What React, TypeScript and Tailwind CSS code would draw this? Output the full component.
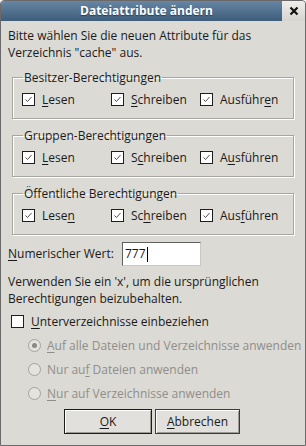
import React from 'react';

const font = { fontFamily: '"Open Sans", "Noto Sans", sans-serif' };

function Check({ checked = true }: { checked?: boolean }) {
  return (
    <span className="flex h-[13px] w-[13px] shrink-0 items-center justify-center border border-[#1e1e1e] bg-white">
      {checked && (
        <svg width="11" height="11" viewBox="0 0 11 11">
          <path d="M2.5 5.5 L4.5 7.5 L8.5 3" fill="none" stroke="#4d4d4d" strokeWidth="1" />
        </svg>
      )}
    </span>
  );
}

// label text with one underlined mnemonic letter
function Mn({ text, at }: { text: string; at: number }) {
  return (
    <span className="whitespace-nowrap">
      {text.slice(0, at)}
      <span className="underline underline-offset-2">{text[at]}</span>
      {text.slice(at + 1)}
    </span>
  );
}

type Perm = { title: string; keys: [number, number, number] };

const GROUPS: Perm[] = [
  { title: 'Besitzer-Berechtigungen', keys: [0, 0, 7] },
  { title: 'Gruppen-Berechtigungen', keys: [0, 1, 1] },
  { title: 'Öffentliche Berechtigungen', keys: [4, 2, 3] },
];

function Group({ title, keys }: Perm) {
  const labels = ['Lesen', 'Schreiben', 'Ausführen'];
  return (
    <fieldset className="mx-[11px] mt-[8px] border border-[#a7a6a0] pb-[10px] pl-[9px] pt-[5px] shadow-[inset_1px_1px_0_#fff,1px_1px_0_#fff]">
      <legend className="ml-[1px] px-[1px] leading-[17px]">{title}</legend>
      <div className="grid grid-cols-[89px_89px_auto] leading-[17px]">
        {labels.map((l, i) => (
          <div key={l} className="flex items-center gap-[7px]">
            <Check />
            <Mn text={l} at={keys[i]} />
          </div>
        ))}
      </div>
    </fieldset>
  );
}

function Radio({ on, children }: { on?: boolean; children: React.ReactNode }) {
  return (
    <div className="flex h-[17px] items-center gap-[6px] pl-[27px] text-[#8f8e8a]">
      <span className="flex h-[13px] w-[13px] shrink-0 items-center justify-center rounded-full border border-[#a3a29e] bg-[#e4e3df]">
        {on && <span className="h-[5px] w-[5px] rounded-full bg-[#8a8985]" />}
      </span>
      {children}
    </div>
  );
}

export default function App() {
  return (
    <div
      className="flex h-[446px] w-[306px] flex-col overflow-hidden rounded-t-[4px] border border-[#6a6a6a] bg-[#dcdad5] text-[12px] text-[#1a1a1a]"
      style={font}
    >
      {/* Title bar */}
      <div className="flex h-[20px] shrink-0">
        <div className="flex flex-1 items-center justify-center rounded-tl-[3px] bg-gradient-to-b from-[#6786a4] to-[#3e5d7b] pl-[10px] font-bold text-white [text-shadow:0_1px_1px_#2a3c4f]">
          Dateiattribute ändern
        </div>
        <div className="flex w-[23px] items-center justify-center rounded-tr-[3px] bg-gradient-to-b from-[#efeeea] to-[#d6d4cf]">
          <svg width="10" height="10" viewBox="0 0 10 10">
            <path d="M1.5 1.5 L8.5 8.5 M8.5 1.5 L1.5 8.5" stroke="#111" strokeWidth="2.2" />
          </svg>
        </div>
      </div>

      <p className="mt-[6px] px-[7px] leading-[17px]">
        Bitte wählen Sie die neuen Attribute für das Verzeichnis "cache" aus.
      </p>

      {GROUPS.map(g => (
        <Group key={g.title} {...g} />
      ))}

      <div className="mt-[7px] flex items-center gap-[8px] px-[7px]">
        <Mn text="Numerischer Wert:" at={0} />
        <div className="flex h-[24px] w-[79px] items-center border border-b-[#c9c8c3] border-l-[#5f5f5f] border-r-[#c9c8c3] border-t-[#5f5f5f] bg-white pl-[2px]">
          777
          <span className="ml-[1px] h-[15px] w-px bg-black" />
        </div>
      </div>

      <p className="mt-[7px] px-[7px] leading-[17px]">
        Verwenden Sie ein 'x', um die ursprünglichen Berechtigungen beizubehalten.
      </p>

      <div className="mt-[6px] flex items-center gap-[7px] pl-[10px] leading-[17px]">
        <Check checked={false} />
        <Mn text="Unterverzeichnisse einbeziehen" at={0} />
      </div>

      <div className="mt-[7px] flex flex-col gap-[7px] leading-[17px]">
        <Radio on>
          <Mn text="Auf alle Dateien und Verzeichnisse anwenden" at={0} />
        </Radio>
        <Radio>
          <Mn text="Nur auf Dateien anwenden" at={6} />
        </Radio>
        <Radio>
          <Mn text="Nur auf Verzeichnisse anwenden" at={0} />
        </Radio>
      </div>

      <div className="mt-[7px] flex justify-center gap-[3px] pr-[2px]">
        <button className="h-[25px] w-[88px] border border-[#1c1c1c] bg-[#e2e0dc] shadow-[inset_1px_1px_0_#fff,inset_-1px_-1px_0_#9d9b96]">
          <Mn text="OK" at={0} />
        </button>
        <button className="h-[25px] w-[85px] border border-[#3a3a3a] bg-[#e2e0dc] shadow-[inset_1px_1px_0_#fff,inset_-1px_-1px_0_#9d9b96]">
          <Mn text="Abbrechen" at={0} />
        </button>
      </div>
    </div>
  );
}
